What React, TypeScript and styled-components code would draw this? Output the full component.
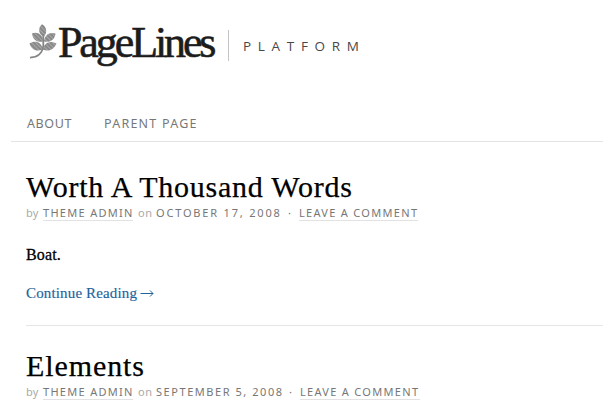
import React from "react";
import styled, { createGlobalStyle } from "styled-components";

const GlobalStyle = createGlobalStyle`
  * { box-sizing: border-box; }
  body { margin: 0; background: #fff; overflow: hidden; }
`;

const Page = styled.div`
  width: 603px;
  height: 408px;
  overflow: hidden;
  background: #fff;
  color: #000;
  font-family: "Liberation Serif", serif;
`;

const Header = styled.header`
  display: flex;
  align-items: flex-start;
  height: 106px;
  padding: 24px 0 0 29px;
`;

const Leaf = styled.svg`
  width: 29px;
  height: 36px;
  flex: none;
`;

const Wordmark = styled.div`
  width: 157px;
  margin-top: -6px;
  font-size: 44px;
  line-height: 50px;
  letter-spacing: -3.1px;
  white-space: nowrap;
  color: #1c1c1c;
  -webkit-text-stroke: 0.6px #1c1c1c;
`;

const Edition = styled.div`
  height: 31px;
  margin: 6px 0 0 13px;
  padding-left: 14px;
  border-left: 1px solid #c4c4c4;
  font: 13.5px/32px "Open Sans", sans-serif;
  letter-spacing: 6.7px;
  white-space: nowrap;
  color: #484848;
`;

const Nav = styled.nav`
  display: flex;
  gap: 32px;
  height: 36px;
  margin-left: 11px;
  padding-left: 16px;
  border-bottom: 1px solid #e4e4e4;
  font: 12.5px/36px "Noto Sans", sans-serif;
  color: #777;
`;

const NavLink = styled.a<{ $tracking: number }>`
  letter-spacing: ${(p) => p.$tracking}px;
  white-space: nowrap;
`;

const Post = styled.article<{ $top: number }>`
  height: 184px;
  margin-left: 26px;
  padding-top: ${(p) => p.$top}px;
  border-bottom: 1px solid #e6e6e6;
`;

const Title = styled.h2<{ $tracking: number }>`
  margin: 0;
  font-size: 30px;
  font-weight: 400;
  line-height: 34px;
  letter-spacing: ${(p) => p.$tracking}px;
  white-space: nowrap;
  -webkit-text-stroke: 0.25px #000;
`;

const Meta = styled.div`
  display: flex;
  height: 17px;
  font: 11px/17px "Noto Sans", sans-serif;
  white-space: nowrap;
`;

const Piece = styled.span<{ $width: number; $tracking: number; $indent?: number; $strong?: boolean }>`
  width: ${(p) => p.$width}px;
  padding-left: ${(p) => p.$indent ?? 0}px;
  flex: none;
  letter-spacing: ${(p) => p.$tracking}px;
  color: ${(p) => (p.$strong ? "#777" : "#aaa")};
`;

const MetaLink = styled.a<{ $width: number }>`
  width: ${(p) => p.$width}px;
  height: 17px;
  flex: none;
  letter-spacing: 1.3px;
  color: #777;
  border-bottom: 1px solid #e2e2e2;
`;

const Excerpt = styled.p`
  margin: 24px 0 0;
  font-size: 16px;
  line-height: 20px;
  letter-spacing: 0.15px;
  -webkit-text-stroke: 0.3px #000;
`;

const More = styled.a`
  display: flex;
  gap: 3px;
  margin-top: 18px;
  font-size: 15px;
  line-height: 20px;
  letter-spacing: 0.15px;
  color: #22639c;
  -webkit-text-stroke: 0.15px #22639c;
`;

const Arrow = styled.svg`
  width: 14px;
  height: 20px;
`;

type Entry = {
  title: string;
  titleTracking: number;
  date: string;
  dateTracking: number;
  dateWidth: number;
  linkWidth: number;
  top: number;
  excerpt?: string;
};

const entries: Entry[] = [
  {
    title: "Worth A Thousand Words",
    titleTracking: 0.76,
    date: "OCTOBER 17, 2008",
    dateTracking: 1.82,
    dateWidth: 132,
    linkWidth: 119,
    top: 28,
    excerpt: "Boat.",
  },
  {
    title: "Elements",
    titleTracking: 0.9,
    date: "SEPTEMBER 5, 2008",
    dateTracking: 1.55,
    dateWidth: 133,
    linkWidth: 120,
    top: 23,
  },
];

function LeafMark() {
  return (
    <Leaf viewBox="0 0 29 36">
      <defs>
        <pattern id="hatch" width="3" height="3" patternUnits="userSpaceOnUse" patternTransform="rotate(-45)">
          <rect width="3" height="3" fill="#858585" />
          <rect width="1.2" height="3" fill="#a8a8a8" />
        </pattern>
      </defs>
      <g fill="url(#hatch)">
        <path d="M13 0.300C17 2 19 8 15 12.500C9.500 11 8.500 4 13 0.300Z" />
        <path d="M3 9.500C8 7.500 14 10 14 17.500C8 19 3.500 15 3 9.500Z" />
        <path d="M26.500 9.500C21 7.500 15.500 10.500 15 17.500C21.500 19 26 15 26.500 9.500Z" />
        <path d="M0.500 19.500C6 16 13 18 13.500 25.500C7 28.500 2 25 0.500 19.500Z" />
        <path d="M27.500 19.500C21.500 16 15 18.500 13.900 25.500C19.500 28.500 25.500 25 27.500 19.500Z" />
      </g>
      <path d="M14.300 10V22C13.500 28 9.500 33.200 1 33.700" fill="none" stroke="#858585" strokeWidth="1.800" />
    </Leaf>
  );
}

export default function App() {
  return (
    <Page>
      <GlobalStyle />
      <Header>
        <LeafMark />
        <Wordmark>PageLines</Wordmark>
        <Edition>PLATFORM</Edition>
      </Header>
      <Nav>
        <NavLink $tracking={0.6}>ABOUT</NavLink>
        <NavLink $tracking={1.25}>PARENT PAGE</NavLink>
      </Nav>
      {entries.map((e) => (
        <Post key={e.title} $top={e.top}>
          <Title $tracking={e.titleTracking}>{e.title}</Title>
          <Meta>
            <Piece $width={17} $tracking={0.3}>by</Piece>
            <MetaLink $width={90}>THEME ADMIN</MetaLink>
            <Piece $width={23} $tracking={0.6} $indent={5}>on</Piece>
            <Piece $width={e.dateWidth} $tracking={e.dateTracking} $strong>{e.date}</Piece>
            <Piece $width={11} $tracking={0} $strong>·</Piece>
            <MetaLink $width={e.linkWidth}>LEAVE A COMMENT</MetaLink>
          </Meta>
          {e.excerpt && (
            <>
              <Excerpt>{e.excerpt}</Excerpt>
              <More>
                Continue Reading
                <Arrow viewBox="0 0 14 20">
                  <path d="M0.500 10.500H13M10 7.500L13 10.500L10 13.500" fill="none" stroke="#22639c" />
                </Arrow>
              </More>
            </>
          )}
        </Post>
      ))}
    </Page>
  );
}
